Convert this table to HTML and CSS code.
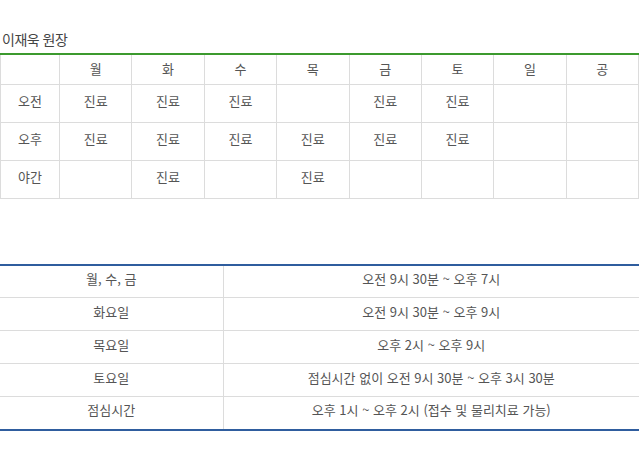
FILE: index.html
```html
<!DOCTYPE html>
<html lang="ko">
<head>
<meta charset="utf-8">
<link rel="stylesheet" href="styles.css">
</head>
<body>
<div class="page">
  <h3 class="doc-title">이재욱 원장</h3>
  <table class="sched">
    <colgroup><col class="c-label"><col><col><col><col><col><col><col><col></colgroup>
    <thead>
      <tr><th></th><th>월</th><th>화</th><th>수</th><th>목</th><th>금</th><th>토</th><th>일</th><th>공</th></tr>
    </thead>
    <tbody>
      <tr><td>오전</td><td>진료</td><td>진료</td><td>진료</td><td></td><td>진료</td><td>진료</td><td></td><td></td></tr>
      <tr><td>오후</td><td>진료</td><td>진료</td><td>진료</td><td>진료</td><td>진료</td><td>진료</td><td></td><td></td></tr>
      <tr><td>야간</td><td></td><td>진료</td><td></td><td>진료</td><td></td><td></td><td></td><td></td></tr>
    </tbody>
  </table>

  <table class="hours">
    <colgroup><col class="h-label"><col></colgroup>
    <tbody>
      <tr><td>월, 수, 금</td><td>오전 9시 30분 ~ 오후 7시</td></tr>
      <tr><td>화요일</td><td>오전 9시 30분 ~ 오후 9시</td></tr>
      <tr><td>목요일</td><td>오후 2시 ~ 오후 9시</td></tr>
      <tr><td>토요일</td><td>점심시간 없이 오전 9시 30분 ~ 오후 3시 30분</td></tr>
      <tr><td>점심시간</td><td>오후 1시 ~ 오후 2시 (접수 및 물리치료 가능)</td></tr>
    </tbody>
  </table>
</div>
</body>
</html>
```

FILE: styles.css
```css
html, body {
  margin: 0;
  padding: 0;
  background: #fff;
}
body {
  font-family: "Noto Sans CJK KR", "Noto Sans", sans-serif;
  color: #555;
  font-size: 13px;
}
.page {
  width: 639px;
  padding-top: 29px;
}
.doc-title {
  margin: 0 0 4px 2px;
  font-size: 14px;
  font-weight: normal;
  color: #444;
  line-height: 20px;
  letter-spacing: -0.5px;
}
table {
  border-collapse: collapse;
  table-layout: fixed;
  width: 639px;
}
.sched {
  border-top: 2px solid #3c9a2e;
}
.sched .c-label { width: 59px; }
.sched th, .sched td {
  border: 1px solid #dcdcdc;
  text-align: center;
  font-weight: normal;
  padding: 0;
  color: #555;
  box-sizing: border-box;
}
.sched th {
  height: 30px;
  border-top: none;
  padding-bottom: 1px;
}
.sched tbody td {
  height: 38px;
  padding-bottom: 5px;
}
.hours {
  margin-top: 65px;
  border-top: 2px solid #2f5d9e;
  border-bottom: 2px solid #2f5d9e;
}
.hours .h-label { width: 223px; }
.hours td {
  height: 33px;
  box-sizing: border-box;
  border-top: 1px solid #dcdcdc;
  text-align: center;
  padding: 0 0 6px;
  color: #555;
}
.hours td:first-child {
  border-right: 1px solid #dcdcdc;
}
.hours tr:first-child td { border-top: none; }
```
